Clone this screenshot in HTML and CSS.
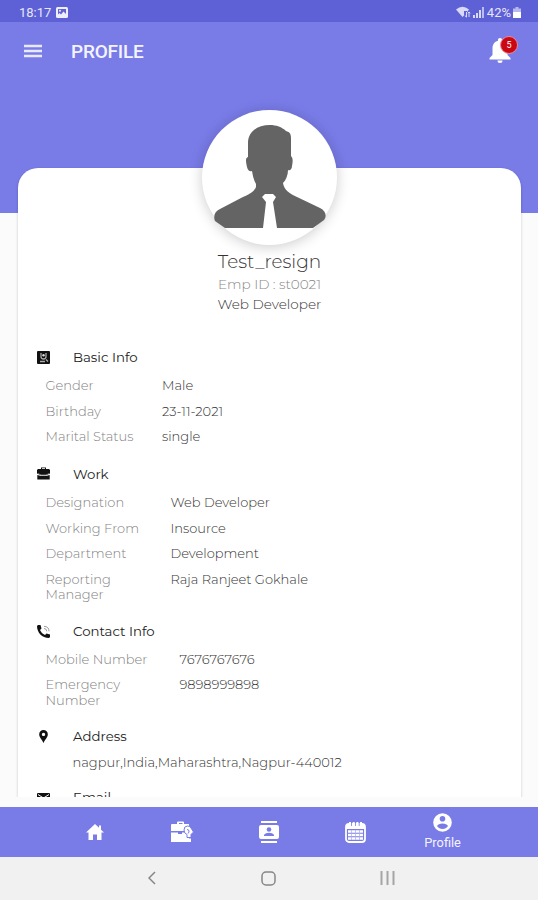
FILE: index.html
```html
<!DOCTYPE html>
<html lang="en">
<head>
    <meta charset="UTF-8">
    <meta name="viewport" content="width=device-width, initial-scale=1.0">
    <title>Profile</title>
    <link rel="stylesheet" href="styles.css">
</head>
<body>
    <div class="status-bar">
        <span class="time">18:17</span>
        <svg class="picture" width="12" height="11" viewBox="0 0 12 11"><rect width="12" height="11" rx="1.5" fill="#eeeefc"/><path d="M2 2h8v5L7.500 4.500 5 7.500 3.500 6 2 7.500z" fill="#6264d4"/><circle cx="4" cy="3.700" r="1" fill="#eeeefc"/></svg>
        <div class="status-right">
            <svg width="15" height="12" viewBox="0 0 15 12"><path d="M0 3.500Q6.500-2 13 3.500L11 6.300V5H8v4.500L6.500 11z" fill="#d9daf8"/><path d="M10.500 6v5M8.800 9.500l1.700 1.700M13 11V6M11.800 7.200 13 6l1.300 1.200" stroke="#d9daf8" fill="none"/></svg>
            <svg width="11" height="11" viewBox="0 0 11 11" fill="#d9daf8"><path d="M0 8h2v3H0zM3 6h2v5H3zM6 3h2v8H6z"/><path d="M9 0h2v11H9z" opacity=".75"/></svg>
            <span>42%</span>
            <svg width="8" height="11" viewBox="0 0 8 11"><path d="M2.500 0h3v1.500H8V11H0V1.500h2.500z" fill="#b7b8ee"/><path d="M0 5h8v6H0z" fill="#fff"/></svg>
        </div>
    </div>

    <header class="app-bar">
        <svg class="menu-icon" width="18" height="14" viewBox="0 0 18 14"><path d="M0 2h18M0 7h18M0 12h18" stroke="#e9e9fd" stroke-width="2.400"/></svg>
        <h1>PROFILE</h1>
        <div class="bell">
            <svg width="22" height="26" viewBox="0 0 22 26" fill="#fff"><path d="M11 0c1.300 0 2 .9 2 2v.8c3.600.9 5.500 3.900 5.500 7.700v6.500l3 3v1.500H.5V20l3-3v-6.500c0-3.800 1.900-6.800 5.500-7.700V2c0-1.100.7-2 2-2zM8.500 22.500h5a2.500 2.500 0 0 1-5 0z"/></svg>
            <span class="badge">5</span>
        </div>
    </header>

    <main class="content">
        <div class="cover"></div>
        <div class="card">
            <div class="avatar">
                <svg width="112" height="104" viewBox="0 0 112 104" fill="#646464"><path d="M56 0C43 0 34 7 34 18v14c-3 1-2 5-1 10 1 4 3 5 5 4 1 6 2 9 4 13v3c-2 5-8 8-15 11L6 84C1 86-1 91 1 96l10 7h38l3-26-4-5 3-3h8l3 3-3 5 4 26h36l11-8c3-4 2-9-4-12L83 72c-7-3-13-7-14-14 3-3 5-8 5-13 2 1 4-1 4-4 1-5 1-8-1-10V13c0-5-2-6-5-7C68 2 62 0 56 0z"/></svg>
            </div>
            <h2>Test_resign</h2>
            <p class="emp-id">Emp ID : st0021</p>
            <p class="role">Web Developer</p>

            <section class="basic">
                <h3><svg width="13" height="13" viewBox="0 0 13 13"><rect width="13" height="13" rx="1" fill="#111"/><path d="M4 2v3.500a2.500 2.500 0 0 0 5 0V2M3 10.500h5M9 8.500l2 2" fill="none" stroke="#aaa" stroke-width="1.300"/><circle cx="6.500" cy="4.300" r="1.200" fill="#ddd"/></svg>Basic Info</h3>
                <dl>
                    <dt>Gender</dt><dd>Male</dd>
                    <dt>Birthday</dt><dd>23-11-2021</dd>
                    <dt>Marital Status</dt><dd>single</dd>
                </dl>
            </section>

            <section class="work">
                <h3><svg width="13" height="13" viewBox="0 0 13 13"><path d="M4 2V.5h5V2h3l1 1v3.500L9 8H4L0 6.500V3l1-1zM5 2h3v-.7H5zM.3 8 4 9h5l3.700-1v4.500H.3z" fill="#111"/><path d="M1 6.500 4 8h5l3-1.500" stroke="#777" fill="none"/></svg>Work</h3>
                <dl>
                    <dt>Designation</dt><dd>Web Developer</dd>
                    <dt>Working From</dt><dd>Insource</dd>
                    <dt>Department</dt><dd>Development</dd>
                    <dt>Reporting Manager</dt><dd>Raja Ranjeet Gokhale</dd>
                </dl>
            </section>

            <section class="contact">
                <h3><svg width="13" height="13" viewBox="0 0 13 13"><path d="M1 0h2.500l1 3.500L3 5c1 2.200 2.600 3.900 5 5l1.500-1.500L13 9.500V12l-1 1C5 13 0 7.500 0 1z" fill="#111"/><path d="M7 3.500q2.500 0 2.800 2.800M7 1.300q5 .2 5 5" fill="none" stroke="#999"/></svg>Contact Info</h3>
                <dl>
                    <dt>Mobile Number</dt><dd>7676767676</dd>
                    <dt>Emergency Number</dt><dd>9898999898</dd>
                </dl>
            </section>

            <section class="address">
                <h3><svg width="13" height="13" viewBox="0 0 13 13"><path d="M6.500 0a4.300 4.300 0 0 1 4.300 4.400C10.800 7.500 8 9 6.500 13 5 9 2.200 7.500 2.200 4.400A4.300 4.300 0 0 1 6.500 0zm0 2.700a1.700 1.700 0 1 0 0 3.400 1.700 1.700 0 0 0 0-3.400z" fill="#111"/></svg>Address</h3>
                <p>nagpur,India,Maharashtra,Nagpur-440012</p>
            </section>

            <section class="email">
                <h3><svg width="13" height="13" viewBox="0 0 13 13"><path d="M0 3q0-1 1-1h11q1 0 1 1v8H0z" fill="#111"/><path d="m1 3.500 5.500 3.500L12 3.500" fill="none" stroke="#fff"/></svg>Email</h3>
            </section>
        </div>
    </main>

    <nav class="tab-bar">
        <a><svg width="18" height="16" viewBox="0 0 18 16" fill="#fff"><path d="M9 0 0 8.500h2.500V16H7v-5.500h4V16h4.500V8.500H18L15 5.700V1.500h-2v2.300z"/></svg></a>
        <a><svg width="24" height="22" viewBox="0 0 24 22"><path d="M7 3V1.500Q7 .5 8 .5h5q1 0 1 1V3h5v7H1V4q0-1 1-1zM9 3h3.500V2H9zM1 11.500h7v1.500h4v-1.500h7V21H1z" fill="#fff"/><path d="M14 9q0-4 3.500-4 2.500 0 3.500 2l2.500 4-2.500 2.500v3h-4v-3q-3-1-3-4.500z" fill="#fff" stroke="#797be7"/><path d="M17 8.500q2.500 0 2 2.500l-1 1.500" stroke="#797be7" fill="none"/><path d="M17.500 17.500h3.500V21h-3.500z" fill="#fff"/></svg></a>
        <a><svg width="20" height="22" viewBox="0 0 20 22"><path d="M2 0h16v2H2zM2 20h16v2H2zM2 4h16q2 0 2 2v10q0 2-2 2H2q-2 0-2-2V6q0-2 2-2z" fill="#fff"/><circle cx="10" cy="8.500" r="2.300" fill="#797be7"/><path d="M5 15v-1.200q1.500-2 5-2t5 2V15z" fill="#797be7"/></svg></a>
        <a><svg width="21" height="22" viewBox="0 0 21 22"><rect x="1" y="3" width="19" height="18" rx="3" fill="none" stroke="#fff" stroke-width="1.800"/><path d="M1 4h19v4H1z" fill="#fff"/><path d="M5 1v4M8.700 1v4M12.400 1v4M16 1v4" stroke="#fff" stroke-width="2"/><path d="M6.500 2v3M10.500 2v3M14.200 2v3" stroke="#797be7" stroke-width=".8"/><path d="M3 10.500h15M3 14h15M3 17.500h15" stroke="#fff" stroke-width="2.400"/><path d="M6.500 9v10M10.500 9v10M14.500 9v10" stroke="#a9aaf0" stroke-width=".7"/></svg></a>
        <a><svg width="19" height="19" viewBox="0 0 19 19"><circle cx="9.500" cy="9.500" r="9.300" fill="#fff"/><circle cx="9.500" cy="5.800" r="2.800" fill="#797be7"/><path d="M4 13q1.300-2.500 5.500-2.500T15 13q-2 3-5.500 3T4 13z" fill="#797be7"/></svg><span>Profile</span></a>
    </nav>

    <div class="system-bar">
        <svg width="8" height="14" viewBox="0 0 8 14"><path d="M7 1 1 7l6 6" fill="none" stroke="#868686" stroke-width="1.500"/></svg>
        <svg width="15" height="15" viewBox="0 0 15 15"><rect x="1" y="1" width="13" height="13" rx="4" fill="none" stroke="#868686" stroke-width="1.500"/></svg>
        <svg width="15" height="14" viewBox="0 0 15 14"><path d="M1.500 0v14M7.500 0v14M13.500 0v14" stroke="#a5a5a5" stroke-width="2"/></svg>
    </div>
</body>
</html>
```

FILE: styles.css
```css
* {
    box-sizing: border-box;
}

body {
    margin: 0;
    height: 900px;
    display: flex;
    flex-direction: column;
    overflow: hidden;
    background: #fbfbfb;
    font-family: Montserrat, Inter, sans-serif;
    color: #333;
}

svg {
    display: block;
    flex: none;
}

h1, h2, h3, p, dl, dd {
    margin: 0;
}

.status-bar {
    height: 22px;
    padding: 2px 17px 0 19px;
    display: flex;
    align-items: center;
    background: #5e60d5;
    color: #e6e6fb;
    font: 13px Roboto, sans-serif;
}

.picture {
    margin-left: 5px;
}

.status-right {
    margin-left: auto;
    display: flex;
    align-items: center;
    gap: 2px;
}

.status-right span {
    margin-left: 1px;
}

.app-bar {
    height: 58px;
    padding: 0 20px 0 24px;
    display: flex;
    align-items: center;
    background: #797be7;
    color: #f4f4ff;
}

.app-bar h1 {
    margin-left: 29px;
    font: 500 19px Roboto, sans-serif;
    letter-spacing: -0.2px;
}

.bell {
    position: relative;
    margin-left: auto;
    margin-right: 7px;
}

.badge {
    position: absolute;
    top: -2px;
    left: 11px;
    width: 18px;
    height: 18px;
    border: 1px solid #e98a9e;
    border-radius: 50%;
    background: #cb0712;
    color: #fff;
    font: 9px/16px Roboto, sans-serif;
    text-align: center;
}

.content {
    height: 717px;
    overflow: hidden;
}

.cover {
    height: 133px;
    background: #797be7;
}

.card {
    height: 800px;
    margin: -45px 17px 0 18px;
    border-radius: 20px 20px 0 0;
    background: #fff;
    box-shadow: 0 1px 3px rgba(0, 0, 0, 0.2);
    display: flow-root;
}

.avatar {
    width: 135px;
    height: 135px;
    margin: -58px auto 0;
    padding: 15px 0 0 12px;
    border-radius: 50%;
    background: #fff;
    box-shadow: 0 2px 14px rgba(0, 0, 0, 0.2);
}

h2 {
    margin-top: 5px;
    font-size: 18.5px;
    font-weight: 300;
    line-height: 24px;
    text-align: center;
}

.emp-id, .role {
    font-size: 13.6px;
    font-weight: 300;
    line-height: 20px;
    text-align: center;
}

.emp-id {
    color: #888;
}

section {
    padding-left: 19px;
}

h3 {
    display: flex;
    align-items: center;
    gap: 23px;
    height: 20px;
    font-size: 13.3px;
    font-weight: 400;
    color: #222;
}

dl {
    display: grid;
    row-gap: 10.2px;
    padding-left: 8.5px;
    font-size: 13px;
    font-weight: 300;
    line-height: 15.4px;
}

dt {
    color: #828282;
}

.basic {
    margin-top: 33px;
}

.basic dl {
    margin-top: 11px;
    grid-template-columns: 116.5px 1fr;
}

.work {
    margin-top: 19px;
}

.work dl {
    margin-top: 11.5px;
    grid-template-columns: 125px 1fr;
}

.work dt, .contact dt {
    padding-right: 20px;
}

.contact {
    margin-top: 18.5px;
}

.contact dl {
    margin-top: 10.5px;
    grid-template-columns: 134px 1fr;
}

.address {
    margin-top: 18px;
}

.address p {
    margin: 8px 0 0 35.5px;
    font-size: 13px;
    font-weight: 300;
    line-height: 16px;
}

.email {
    margin-top: 17px;
}

.tab-bar {
    height: 50px;
    margin-top: 10px;
    padding: 0 52px;
    display: grid;
    grid-template-columns: repeat(5, 1fr);
    background: #797be7;
}

.tab-bar a {
    display: flex;
    flex-direction: column;
    align-items: center;
    justify-content: center;
    gap: 3px;
    color: #f4f4ff;
    font: 12.8px/16px Roboto, sans-serif;
}

.system-bar {
    height: 43px;
    padding: 0 143px 1px 148px;
    display: flex;
    align-items: center;
    justify-content: space-between;
    background: #f1f1f1;
}
```
